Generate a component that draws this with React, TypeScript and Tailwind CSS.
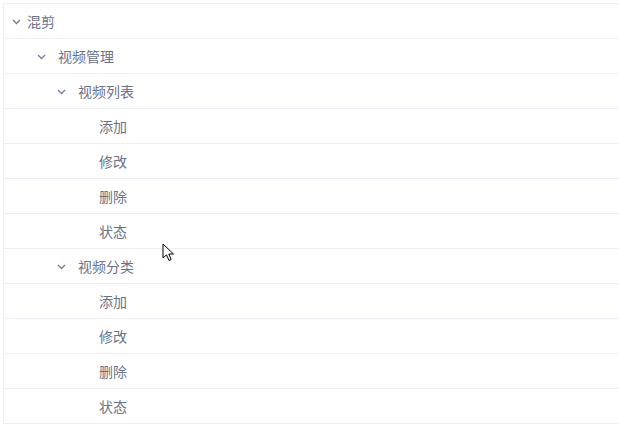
const ROWS: { label: string; level: number; open?: boolean }[] = [
  { label: "混剪", level: 0, open: true },
  { label: "视频管理", level: 1, open: true },
  { label: "视频列表", level: 2, open: true },
  { label: "添加", level: 3 },
  { label: "修改", level: 3 },
  { label: "删除", level: 3 },
  { label: "状态", level: 3 },
  { label: "视频分类", level: 2, open: true },
  { label: "添加", level: 3 },
  { label: "修改", level: 3 },
  { label: "删除", level: 3 },
  { label: "状态", level: 3 },
];

const ARROW_PAD = ["pl-[8px]", "pl-[33px]", "pl-[53px]"];

function Chevron() {
  return (
    <svg width="9" height="6" viewBox="0 0 9 6" className="mt-[1px] shrink-0">
      <path d="M1 1 L4.5 4.5 L8 1" fill="none" stroke="#76809a" strokeWidth="1.4" />
    </svg>
  );
}

function Cursor() {
  return (
    <svg
      width="14"
      height="20"
      viewBox="0 0 14 20"
      className="absolute left-[162px] top-[243px]"
    >
      <path
        d="M1 1 L1 15 L4.5 11.8 L7 17.5 L9.2 16.5 L6.8 11 L11.5 11 Z"
        fill="#fff"
        stroke="#000"
        strokeWidth="1"
        strokeLinejoin="round"
      />
    </svg>
  );
}

export default function App() {
  return (
    <div className="relative h-[427px] w-[619px] overflow-hidden bg-white pt-[3px] pl-[3px] font-['Noto_Sans_CJK_SC','Microsoft_YaHei',sans-serif] text-[14px] text-[#6b7286]">
      <div className="border-l border-t border-[#ebeef5]">
        {ROWS.map((row, i) => (
          <div
            key={i}
            className="flex h-[35px] items-center border-b border-[#ebeef5]"
          >
            {row.level < 3 ? (
              <div className={`flex items-center ${ARROW_PAD[row.level]}`}>
                <Chevron />
                <span className={row.level === 0 ? "ml-[6px]" : "ml-[12px]"}>
                  {row.label}
                </span>
              </div>
            ) : (
              <span className="pl-[95px]">{row.label}</span>
            )}
          </div>
        ))}
      </div>
      <Cursor />
    </div>
  );
}
